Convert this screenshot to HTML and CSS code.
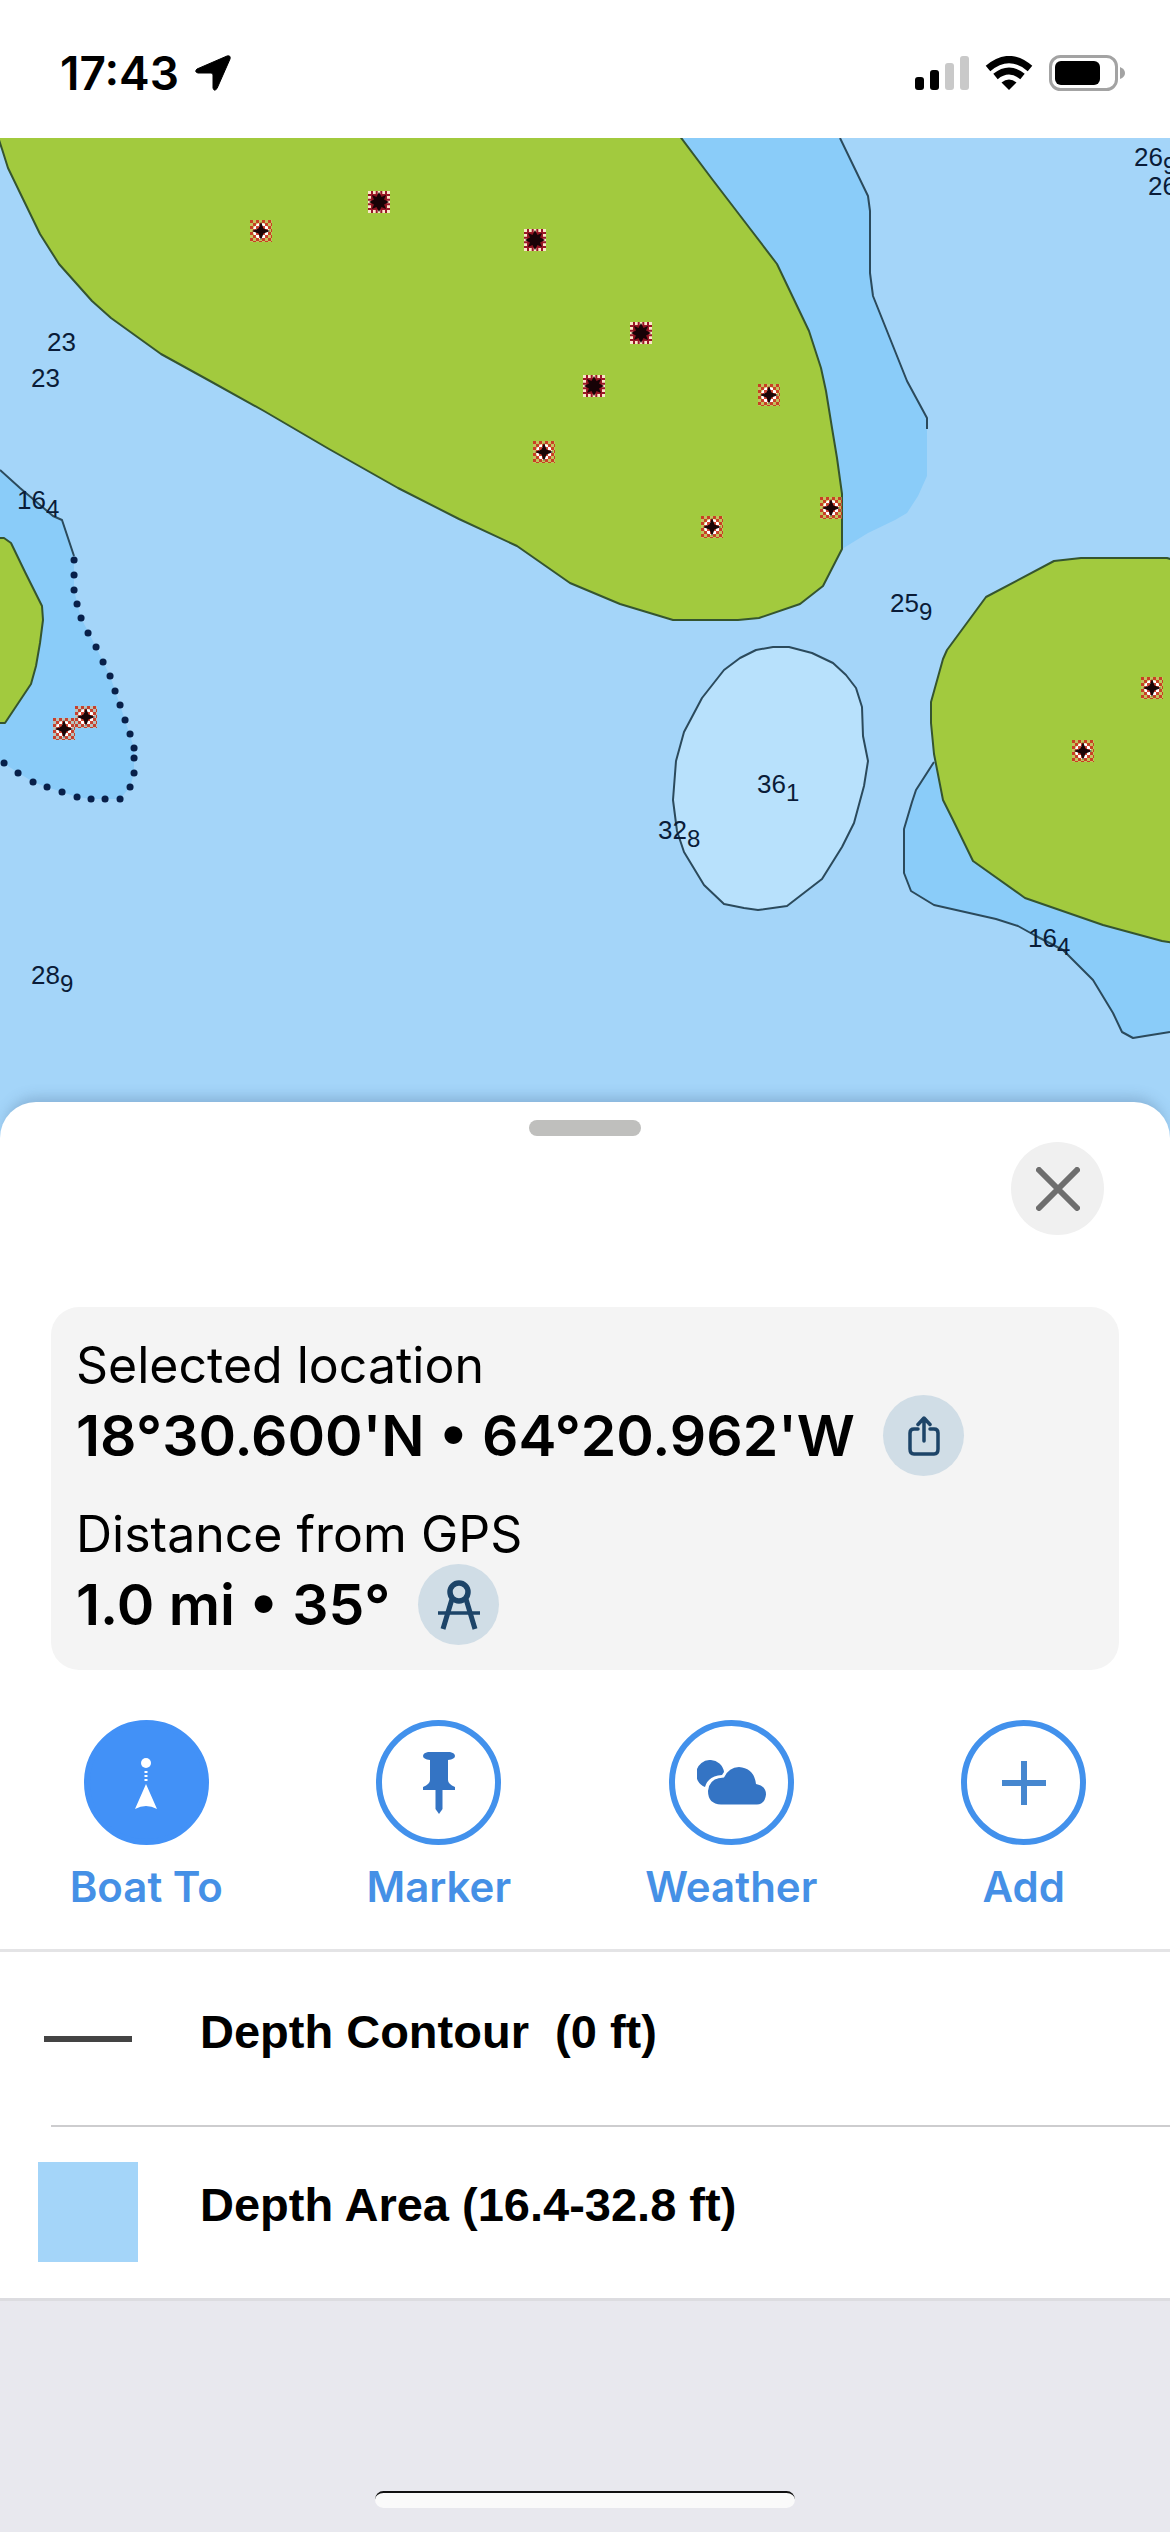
FILE: index.html
```html
<!DOCTYPE html>
<html lang="en">
<head>
    <meta charset="UTF-8">
    <meta name="viewport" content="width=device-width, initial-scale=1.0">
    <title>Nautical Chart</title>
    <link rel="stylesheet" href="styles.css">
</head>
<body>
    <header class="status-bar">
        <div class="status-left">
            <span class="time">17:43</span>
            <svg width="36" height="36" viewBox="0 0 36 36" aria-hidden="true">
                <path d="M32 1 Q36 0 35 4 L22 33.500 Q19 37 18 33 V20 Q18 18 16 18 H3 Q-1 17 2 14 Z" stroke="#000" stroke-width="1"/>
            </svg>
        </div>
        <div class="status-right">
            <svg width="54" height="34" viewBox="0 0 54 34" aria-hidden="true">
                <rect x="0" y="21" width="9" height="13" rx="3"/>
                <rect x="15" y="14" width="9" height="20" rx="3"/>
                <rect x="30" y="7" width="9" height="27" rx="3" fill="#c9c9c9"/>
                <rect x="45" y="0" width="9" height="34" rx="3" fill="#c9c9c9"/>
            </svg>
            <svg width="48" height="34" viewBox="0 0 48 34" aria-hidden="true">
                <path d="M24 34 L16.500 26.500 Q24 20.500 31.500 26.500 Z"/>
                <path d="M10.500 20.500 Q24 9.500 37.500 20.500" fill="none" stroke="#000" stroke-width="7"/>
                <path d="M3 12.500 Q24 -5.500 45 12.500" fill="none" stroke="#000" stroke-width="7"/>
            </svg>
            <svg width="77" height="36" viewBox="0 0 77 36" aria-hidden="true">
                <rect x="1.500" y="1.500" width="66" height="33" rx="10" fill="none" stroke="#a3a3a3" stroke-width="3"/>
                <rect x="6" y="6" width="45" height="24" rx="6"/>
                <path d="M71 12 Q76 14 76 18 T71 24 Z" fill="#a3a3a3"/>
            </svg>
        </div>
    </header>

    <main>
        <svg class="chart" viewBox="0 137 1170 1000" role="img" aria-label="Chart">
            <defs>
                <pattern id="check" width="6" height="6" patternUnits="userSpaceOnUse">
                    <rect width="3" height="3" fill="#c8321e"/>
                    <rect x="3" y="3" width="3" height="3" fill="#c8321e"/>
                </pattern>
                <symbol id="rock" viewBox="0 0 22 22">
                    <rect width="22" height="22" fill="#e6b87e" opacity=".5"/>
                    <circle cx="11" cy="11" r="8" fill="#fff"/>
                    <rect width="22" height="22" fill="url(#check)" opacity=".9"/>
                    <path d="M11 2 L13.500 8.500 L20 11 L13.500 13.500 L11 20 L8.500 13.500 L2 11 L8.500 8.500 Z" fill="#1a0508"/>
                </symbol>
                <symbol id="reef" viewBox="0 0 22 22">
                    <rect width="22" height="22" fill="#fbe6c8"/>
                    <path d="M4 0 V22 M8.700 0 V22 M13.300 0 V22 M18 0 V22 M0 4 H22 M0 8.700 H22 M0 13.300 H22 M0 18 H22" stroke="#9a1828" stroke-width="2"/>
                    <rect x="4" y="4" width="14" height="14" fill="#8a1420"/>
                    <path d="M11 1 L13.500 6 L18 4 L16 8.500 L21 11 L16 13.500 L18 18 L13.500 16 L11 21 L8.500 16 L4 18 L6 13.500 L1 11 L6 8.500 L4 4 L8.500 6 Z" fill="#170206"/>
                </symbol>
            </defs>

            <rect class="water" y="137" width="1170" height="1000"/>

            <!-- shallow water -->
            <path class="shallow" d="M681 137 H840 L868 195 L870 210 V272 L873 295 L895 350 L907 380 L927 417 V475 L918 495 L907 512 L895 519 L868 532 L842 548 L780 400 Z"/>
            <path class="shallow" d="M0 469 L20 487 L53 515 L62 519 L68 537 L74 559 V589 L81 617 L96 646 L110 675 L120 704 L134 747 V772 L130 786 L120 798 H91 L77 796 L47 786 L33 781 L0 760 Z"/>
            <path class="shallow" d="M934 761 L916 789 L912 801 L904 828 V872 L911 890 L934 904 L996 918 L1018 925 L1036 935 L1063 949 L1093 979 L1113 1012 L1122 1031 L1133 1037 L1145 1035 L1170 1031 V900 Z"/>

            <!-- contours -->
            <path class="line" d="M840 137 L868 195 L870 210 V272 L873 295 L895 350 L907 380 L927 417 V428"/>
            <path class="line" d="M0 469 L20 487 L53 515 L62 519 L68 537 L74 555"/>
            <path class="line" d="M934 761 L916 789 L912 801 L904 828 V872 L911 890 L934 904 L996 918 L1018 925 L1036 935 L1063 949 L1093 979 L1113 1012 L1122 1031 L1133 1037 L1145 1035 L1170 1031"/>
            <path class="line deep" d="M756 649 L773 646 H789 L812 652 L833 662 L846 674 L856 687 L862 706 L863 735 L868 760 L864 785 L854 822 L842 846 L822 878 L787 905 L758 909 L744 907 L724 903 L704 884 L684 851 L677 830 L673 799 L676 760 L684 731 L702 697 L724 669 L740 657 Z"/>

            <!-- land -->
            <path class="line land" d="M-4 130 L2 148 L8 167 L23 198 L40 233 L59 263 L92 300 L111 317 L161 353 L210 380 L264 410 L329 448 L398 487 L459 518 L517 545 L570 582 L620 603 L673 619 H738 L759 617 L800 603 L823 585 L842 548 V493 L837 457 L832 427 L826 390 L821 367 L809 330 L777 263 L748 225 L712 178 L676 130 Z"/>
            <path class="line land" d="M-4 537 H4 L11 542 L25 571 L42 605 L43 619 L40 642 L36 665 L31 683 L5 722 H-4 Z"/>
            <path class="line land" d="M1174 559 L1167 557 H1081 L1054 560 L986 596 L947 649 L943 658 L931 701 V722 L934 753 L943 799 L953 819 L973 860 L1025 897 L1103 924 L1162 940 L1174 942 Z"/>

            <path class="dots" d="M74 559h.1M74 574h.1M74 589h.1M77 603h.1M81 617h.1M88 632h.1M96 646h.1M103 661h.1M110 675h.1M115 690h.1M120 704h.1M125 719h.1M130 733h.1M134 747h.1M134 757h.1M134 772h.1M130 786h.1M120 798h.1M105 798h.1M91 798h.1M77 796h.1M62 791h.1M47 786h.1M33 781h.1M18 772h.1M4 762h.1"/>

            <use href="#rock" x="250" y="219" width="22" height="22"/>
            <use href="#rock" x="533" y="440" width="22" height="22"/>
            <use href="#rock" x="758" y="383" width="22" height="22"/>
            <use href="#rock" x="701" y="515" width="22" height="22"/>
            <use href="#rock" x="820" y="496" width="22" height="22"/>
            <use href="#rock" x="1141" y="676" width="22" height="22"/>
            <use href="#rock" x="1072" y="739" width="22" height="22"/>
            <use href="#rock" x="75" y="705" width="22" height="22"/>
            <use href="#rock" x="53" y="717" width="22" height="22"/>
            <use href="#reef" x="368" y="190" width="22" height="22"/>
            <use href="#reef" x="524" y="228" width="22" height="22"/>
            <use href="#reef" x="630" y="321" width="22" height="22"/>
            <use href="#reef" x="583" y="374" width="22" height="22"/>

            <!-- soundings -->
            <g class="sounding">
                <text x="47" y="350">23</text>
                <text x="31" y="386">23</text>
                <text x="17" y="508">16<tspan class="sub" dy="8">4</tspan></text>
                <text x="1134" y="165">26<tspan class="sub" dy="8">9</tspan></text>
                <text x="1148" y="194">26</text>
                <text x="890" y="611">25<tspan class="sub" dy="8">9</tspan></text>
                <text x="757" y="792">36<tspan class="sub" dy="8">1</tspan></text>
                <text x="658" y="838">32<tspan class="sub" dy="8">8</tspan></text>
                <text x="1028" y="946">16<tspan class="sub" dy="8">4</tspan></text>
                <text x="31" y="983">28<tspan class="sub" dy="8">9</tspan></text>
            </g>
        </svg>

        <section class="sheet">
            <div class="handle"></div>
            <div class="sheet-top">
                <button class="close" aria-label="Close">
                    <svg width="44" height="44" viewBox="0 0 44 44">
                        <path d="M3 3 L41 41 M41 3 L3 41" stroke="#6e6e6e" stroke-width="6" stroke-linecap="round"/>
                    </svg>
                </button>
            </div>

            <div class="card">
                <div class="info">
                    <div class="info-label">Selected location</div>
                    <div class="info-row">
                        <span>18°30.600'N • 64°20.962'W</span>
                        <button class="round" aria-label="Share">
                            <svg width="32" height="40" viewBox="0 0 32 40" fill="none" stroke="#1d4468" stroke-width="3.500" stroke-linecap="round" stroke-linejoin="round">
                                <path d="M10 13 H6 Q2 13 2 17 V33 Q2 38 6 38 H26 Q30 38 30 33 V17 Q30 13 26 13 H22"/>
                                <path d="M16 25 V3 M10 8.500 L16 2 L22 8.500"/>
                            </svg>
                        </button>
                    </div>
                </div>
                <div class="info">
                    <div class="info-label">Distance from GPS</div>
                    <div class="info-row">
                        <span>1.0 mi • 35°</span>
                        <button class="round" aria-label="Measure">
                            <svg width="42" height="50" viewBox="0 0 42 50" fill="none" stroke="#1d4468">
                                <circle cx="21" cy="12" r="9" stroke-width="5.500"/>
                                <path d="M14 19 L5 49 M28 19 L37 49" stroke-width="5"/>
                                <path d="M0 33 H42" stroke-width="3.500"/>
                            </svg>
                        </button>
                    </div>
                </div>
            </div>

            <nav class="actions">
                <button class="action">
                    <span class="circle filled">
                        <svg width="22" height="52" viewBox="0 0 22 52" fill="#fff">
                            <circle cx="11" cy="6" r="5"/>
                            <path d="M9.500 14h3v2h-3zM9.500 18h3v2h-3zM9.500 22h3v2h-3z"/>
                            <path d="M11 27 L22 52 Q11 46 0 52 Z"/>
                        </svg>
                    </span>
                    Boat To
                </button>
                <button class="action">
                    <span class="circle">
                        <svg width="32" height="62" viewBox="0 0 32 62" fill="#3474c4">
                            <path d="M5 0 H27 Q32 1 32 4 Q32 7 25 8 V28 Q25 32 32 35 V38 H0 V35 Q7 32 7 28 V8 Q0 7 0 4 Q0 1 5 0 Z"/>
                            <path d="M12.500 36 H19.500 V57 L16 62 L12.500 57 Z"/>
                        </svg>
                    </span>
                    Marker
                </button>
                <button class="action">
                    <span class="circle">
                        <svg width="69" height="45" viewBox="0 0 69 45" fill="#3474c4">
                            <path d="M8 27 A14 14 0 1 1 27 12 L25 15 Q11 16 8 27 Z"/>
                            <path d="M24 44.500 Q11 44 11 31 Q12 18 27 17.500 Q32 7 42 7 Q57 8 59 24 Q69 26 69 34.500 Q68 44 60 44.500 Z"/>
                        </svg>
                    </span>
                    Weather
                </button>
                <button class="action">
                    <span class="circle">
                        <svg width="44" height="44" viewBox="0 0 44 44">
                            <path d="M22 0 V44 M0 22 H44" stroke="#4687cf" stroke-width="6"/>
                        </svg>
                    </span>
                    Add
                </button>
            </nav>

            <ul class="features">
                <li class="feature">
                    <span class="swatch"><span class="swatch-line"></span></span>
                    <span class="feature-name">Depth Contour&nbsp; (0 ft)</span>
                </li>
                <li class="feature">
                    <span class="swatch swatch-area"></span>
                    <span class="feature-name">Depth Area (16.4-32.8 ft)</span>
                </li>
            </ul>
        </section>
    </main>

    <footer class="bottom">
        <div class="home-indicator"></div>
    </footer>
</body>
</html>
```

FILE: styles.css
```css
* {
    box-sizing: border-box;
}

body {
    margin: 0;
    min-height: 100vh;
    display: flex;
    flex-direction: column;
    background: #e8e8ee;
    color: #000;
    font-family: Inter, "Liberation Sans", sans-serif;
}

button {
    border: none;
    padding: 0;
    background: none;
    font-family: inherit;
    cursor: pointer;
}

svg {
    display: block;
}

/* Status bar */
.status-bar {
    display: flex;
    justify-content: space-between;
    align-items: center;
    height: 138px;
    padding: 8px 44px 0 60px;
    background: #fff;
}

.status-left,
.status-right {
    display: flex;
    align-items: center;
    gap: 16px;
}

.time {
    font-size: 46px;
    font-weight: 600;
}

/* Chart */
.chart {
    width: 100%;
    height: auto;
}

.water {
    fill: #a4d5f9;
}

.shallow {
    fill: #8accf9;
}

.line {
    fill: none;
    stroke: #2b4a5c;
    stroke-width: 2;
    stroke-linejoin: round;
}

.deep {
    fill: #b8e1fc;
}

.land {
    fill: #a2ca3e;
    stroke: #35552f;
}

.dots {
    stroke: #08204a;
    stroke-width: 7;
    stroke-linecap: round;
}

.sounding {
    font-family: "Liberation Sans", Arial, sans-serif;
    font-size: 26px;
    fill: #0a1c38;
}

.sub {
    font-size: 24px;
}

/* Sheet */
.sheet {
    position: relative;
    margin-top: -36px;
    padding-top: 18px;
    border-radius: 36px 36px 0 0;
    background: #fff;
    box-shadow: 0 -10px 14px -6px rgba(60, 90, 130, 0.3);
}

.handle {
    width: 112px;
    height: 16px;
    margin: 0 auto;
    border-radius: 8px;
    background: #bfbfbd;
}

.sheet-top {
    display: flex;
    justify-content: flex-end;
    padding: 6px 66px 72px;
}

.close {
    display: flex;
    align-items: center;
    justify-content: center;
    width: 93px;
    height: 93px;
    border-radius: 50%;
    background: #f0f0f0;
}

.card {
    display: flex;
    flex-direction: column;
    gap: 28px;
    margin: 0 51px;
    padding: 28px 25px 25px;
    border-radius: 28px;
    background: #f4f4f4;
}

.info-label {
    font-size: 50px;
    line-height: 60px;
}

.info-row {
    display: flex;
    align-items: center;
    gap: 28px;
    font-size: 57px;
    font-weight: 600;
}

.round {
    display: flex;
    align-items: center;
    justify-content: center;
    width: 81px;
    height: 81px;
    border-radius: 50%;
    background: #d0dde6;
}

.actions {
    display: grid;
    grid-template-columns: repeat(4, 1fr);
    padding: 50px 0 36px;
}

.action {
    display: flex;
    flex-direction: column;
    align-items: center;
    gap: 16px;
    color: #4590e6;
    font-size: 42px;
    font-weight: 600;
    line-height: 52px;
}

.circle {
    display: flex;
    align-items: center;
    justify-content: center;
    width: 125px;
    height: 125px;
    border: 6px solid #4291ec;
    border-radius: 50%;
}

.filled {
    background: #4291f7;
    border-color: #4291f7;
}

/* Feature list */
.features {
    margin: 0;
    padding: 0;
    list-style: none;
    border-top: 3px solid #e4e4e6;
    border-bottom: 3px solid #dcdce0;
}

.feature {
    display: flex;
    align-items: center;
    gap: 62px;
    height: 173px;
    padding-left: 38px;
}

.feature + .feature {
    background: linear-gradient(#cdcdcf, #cdcdcf) 51px 0 / 100% 2px no-repeat;
}

.swatch {
    display: flex;
    align-items: center;
    justify-content: center;
    width: 100px;
    height: 100px;
}

.swatch-line {
    width: 88px;
    height: 6px;
    background: #444;
}

.swatch-area {
    background: #a4d5f9;
}

.feature-name {
    padding-bottom: 14px;
    font-family: "Liberation Sans", Arial, sans-serif;
    font-size: 47px;
    font-weight: 700;
}

/* Home indicator */
.bottom {
    display: flex;
    flex: 1;
    align-items: flex-end;
    justify-content: center;
    min-height: 120px;
    padding-bottom: 24px;
}

.home-indicator {
    width: 420px;
    height: 17px;
    border-top: 2px solid #111;
    border-radius: 9px;
    background: #fafafa;
}
```
